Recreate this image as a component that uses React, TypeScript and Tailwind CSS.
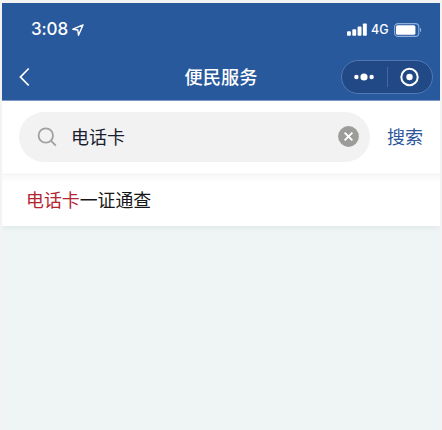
const results = [{ match: '电话卡', rest: '一证通查' }];

const StatusBar = () => (
  <div className="flex h-[53px] items-center justify-between pl-[29px] pr-[18px]">
    <div className="flex items-center gap-[4px]">
      <span className="font-['Inter'] text-[17px] font-medium leading-none tracking-[-0.1px]">3:08</span>
      <svg width="12" height="12" viewBox="0 0 12 12" fill="none" stroke="currentColor" strokeWidth="1.4" strokeLinejoin="round">
        <path d="M11 .9.9 5.2l4.9.8.7 5.2z" />
      </svg>
    </div>
    <div className="flex items-center">
      <svg className="mb-px" width="20" height="13" viewBox="0 0 20 13" fill="currentColor">
        <rect x="0" y="8.3" width="3.9" height="4.4" rx="0.8" />
        <rect x="5.3" y="6.3" width="3.9" height="6.4" rx="0.8" />
        <rect x="10.6" y="3.6" width="3.9" height="9.1" rx="0.8" />
        <rect x="15.9" y="0.5" width="3.9" height="12.2" rx="0.8" />
      </svg>
      <span className="ml-[4px] w-[18px] pt-px font-['Inter'] text-[12.5px] font-medium leading-none">4G</span>
      <svg className="ml-[5px]" width="28" height="14" viewBox="0 0 28 14" fill="none">
        <rect x="0.6" y="0.6" width="24.2" height="12.8" rx="3.5" stroke="#8fb0dd" strokeWidth="1.1" />
        <rect x="2" y="2.2" width="19.4" height="9.6" rx="1.6" fill="#fff" />
        <path d="M26 4.8c1.6.6 1.6 3.8 0 4.4z" fill="#8fb0dd" />
      </svg>
    </div>
  </div>
);

const NavBar = () => (
  <div className="grid h-[44px] grid-cols-[92px_1fr_92px] items-center pb-[2px] pl-[7px] pr-[7px]">
    <svg className="ml-[10px]" width="11" height="20" viewBox="0 0 11 20" fill="none" stroke="currentColor" strokeWidth="1.8">
      <path d="M9.7 1.5 1.5 10l8.2 8.5" />
    </svg>
    <h1 className="pb-px text-center text-[18.2px] font-medium leading-none">便民服务</h1>
    <div className="flex h-[34px] items-center rounded-full border border-[#5279b3] bg-[#214985]">
      <div className="flex flex-1 justify-center">
        <svg width="20" height="8" viewBox="0 0 20 8" fill="currentColor">
          <circle cx="2.4" cy="4" r="2.2" />
          <circle cx="10" cy="4" r="3.6" />
          <circle cx="17.6" cy="4" r="2.2" />
        </svg>
      </div>
      <div className="h-[20px] w-px bg-[#43699f]" />
      <div className="flex flex-1 justify-center">
        <svg width="20" height="20" viewBox="0 0 20 20" fill="none">
          <circle cx="9.5" cy="10" r="8.2" stroke="currentColor" strokeWidth="2" />
          <circle cx="9.5" cy="10" r="3.2" fill="currentColor" />
        </svg>
      </div>
    </div>
  </div>
);

const SearchBar = () => (
  <div className="flex h-[73px] items-center bg-white pb-px pl-[17px] pr-[17px]">
    <div className="flex h-[50px] w-[351px] items-center rounded-full bg-[#f2f2f2] pl-[18px] pr-[11px]">
      <svg width="20" height="20" viewBox="0 0 20 20" fill="none" stroke="#a0a09f" strokeWidth="1.8">
        <circle cx="8.8" cy="8.5" r="7.2" />
        <path d="m13.9 13.7 4.9 4.9" />
      </svg>
      <span className="ml-[14px] flex-1 pb-[2px] text-[18px] leading-none text-[#18202e]">电话卡</span>
      <svg className="mb-px" width="21" height="21" viewBox="0 0 21 21" fill="none">
        <circle cx="10.5" cy="10.5" r="10.4" fill="#9c9d99" />
        <path d="m6.6 6.6 7.8 7.8m0-7.8-7.8 7.8" stroke="#fff" strokeWidth="1.9" />
      </svg>
    </div>
    <button className="ml-auto pb-[2px] text-[18px] leading-none text-[#2c569a]">搜索</button>
  </div>
);

const App = () => (
  <div className="h-[430px] w-[442px] overflow-hidden bg-[#f3f3f3] px-[2px] pt-[3px] font-['Noto_Sans_CJK_SC',sans-serif]">
    <div className="h-[427px] overflow-hidden bg-[#eff5f5]">
      <header className="border-b border-[#7d9bc6] bg-[#28599d] text-white">
        <StatusBar />
        <NavBar />
      </header>
      <SearchBar />
      <ul className="shadow-[0_2px_5px_rgba(40,60,90,0.07)]">
        {results.map(({ match, rest }) => (
          <li
            key={match + rest}
            className="flex h-[52px] items-center border-t border-[#f5f5f5] bg-linear-to-b from-[#f8f8f8] to-white to-[8px] pb-px pl-[24px] text-[17.9px] leading-none text-[#161616]"
          >
            <span className="text-[#b32430]">{match}</span>
            {rest}
          </li>
        ))}
      </ul>
    </div>
  </div>
);

export default App;
